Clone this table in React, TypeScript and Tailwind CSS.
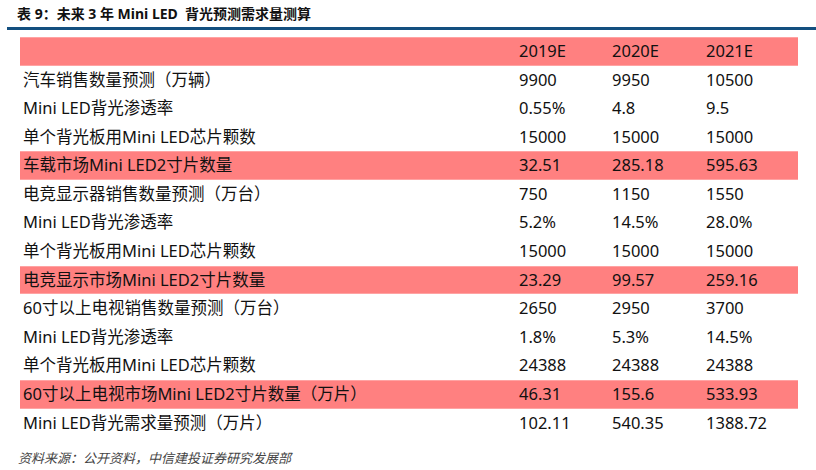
const rows: { label: string; values: string[]; hl?: boolean }[] = [
  { label: "", values: ["2019E", "2020E", "2021E"], hl: true },
  { label: "汽车销售数量预测（万辆）", values: ["9900", "9950", "10500"] },
  { label: "Mini LED背光渗透率", values: ["0.55%", "4.8", "9.5"] },
  { label: "单个背光板用Mini LED芯片颗数", values: ["15000", "15000", "15000"] },
  { label: "车载市场Mini LED2寸片数量", values: ["32.51", "285.18", "595.63"], hl: true },
  { label: "电竞显示器销售数量预测（万台）", values: ["750", "1150", "1550"] },
  { label: "Mini LED背光渗透率", values: ["5.2%", "14.5%", "28.0%"] },
  { label: "单个背光板用Mini LED芯片颗数", values: ["15000", "15000", "15000"] },
  { label: "电竞显示市场Mini LED2寸片数量", values: ["23.29", "99.57", "259.16"], hl: true },
  { label: "60寸以上电视销售数量预测（万台）", values: ["2650", "2950", "3700"] },
  { label: "Mini LED背光渗透率", values: ["1.8%", "5.3%", "14.5%"] },
  { label: "单个背光板用Mini LED芯片颗数", values: ["24388", "24388", "24388"] },
  { label: "60寸以上电视市场Mini LED2寸片数量（万片）", values: ["46.31", "155.6", "533.93"], hl: true },
  { label: "Mini LED背光需求量预测（万片）", values: ["102.11", "540.35", "1388.72"] },
];

export default function App() {
  return (
    <div
      className="w-[816px] h-[470px] bg-white text-[#111] overflow-hidden"
      style={{ fontFamily: '"Noto Sans", "Noto Sans CJK SC", sans-serif' }}
    >
      {/* Title */}
      <div className="h-[27px] pl-[17px] pt-[5px] text-[14px] leading-[18px] font-bold text-[#111]">
        表 9：未来 3 年 Mini LED&nbsp; 背光预测需求量测算
      </div>
      <div className="ml-[7px] h-[3px] bg-[#134f7f]" />

      {/* Table */}
      <div className="mt-[7px] ml-[20px] w-[778px]">
        {rows.map((r, i) => (
          <div
            key={i}
            className={
              r.hl
                ? "grid grid-cols-[495px_93px_94px_96px] h-[28.6px] items-center text-[16.5px] bg-[#ff8080] border-y border-[#ffa3a3]"
                : "grid grid-cols-[495px_93px_94px_96px] h-[28.6px] items-center text-[16.5px]"
            }
          >
            <div className="pl-[3px] whitespace-nowrap">{r.label}</div>
            {r.values.map((v, j) => (
              <div key={j} className="pl-[4px] whitespace-nowrap">
                {v}
              </div>
            ))}
          </div>
        ))}
      </div>

      {/* Source */}
      <div className="mt-[12px] pl-[18px] text-[13px] leading-[18px] italic text-[#444]">
        资料来源：公开资料，中信建投证券研究发展部
      </div>
    </div>
  );
}
